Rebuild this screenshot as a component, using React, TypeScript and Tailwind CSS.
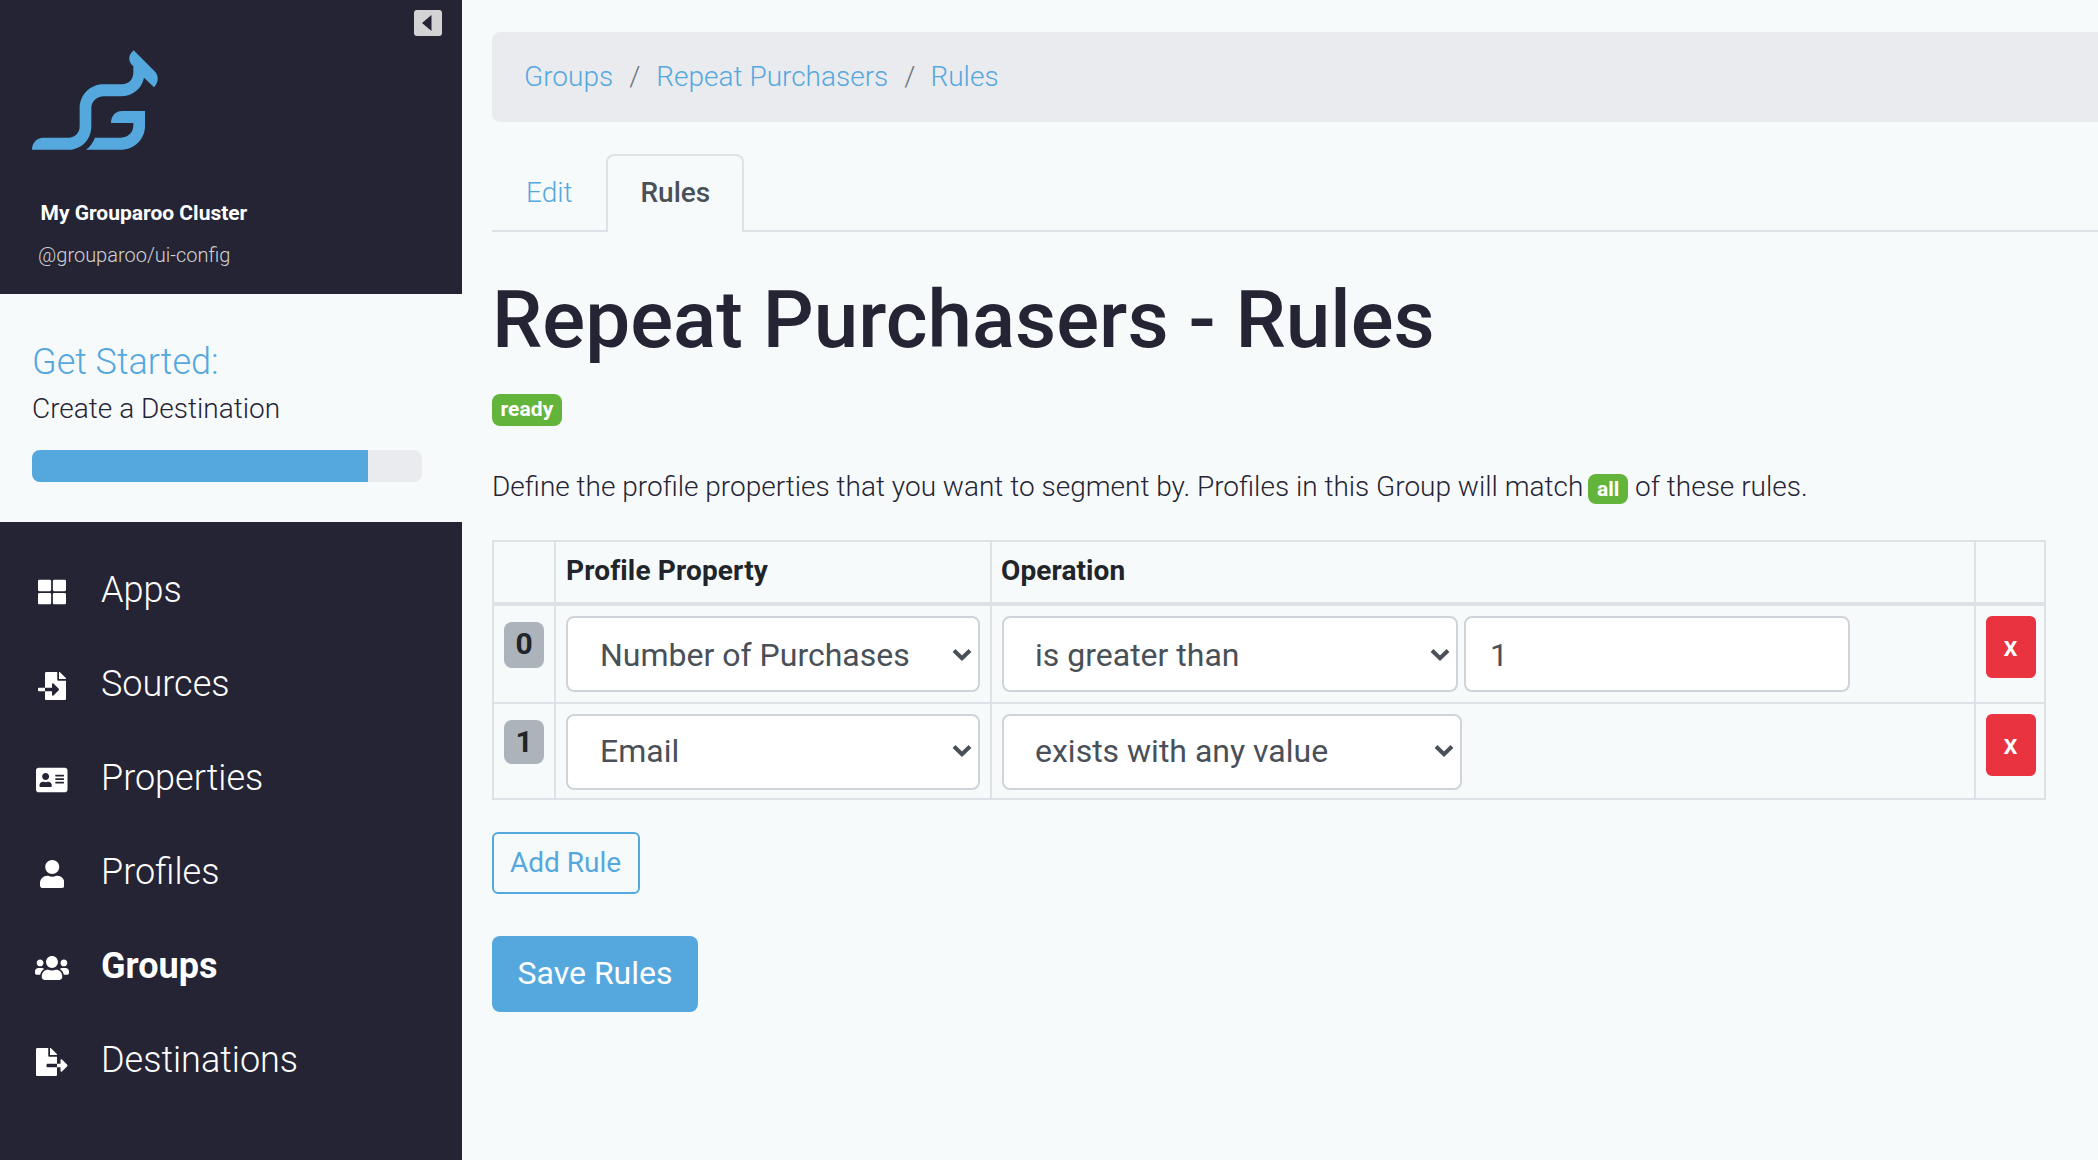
import React from "react";
import type { IconType } from "react-icons";
import {
  FaAddressCard,
  FaFileExport,
  FaFileImport,
  FaThLarge,
  FaUser,
  FaUsers,
} from "react-icons/fa";

function Logo() {
  return (
    <svg className="block h-[100px] w-[126px] fill-[#55a8de]" viewBox="96 150 378 300">
      <path d="M96 449.500C96 428 110 413 130 413H205C226 413 239 398 239 378V325C239 285 270 253 310 253H365C388 253 400 237 400 217V199C384 185 383 165 401 150.500L466 216C477 230 475 248 462 262L432 233C426 265 398 289 362 289H312C290 289 274 304 274 326V378C274 420 243 449.500 205 449.500Z" />
      <path d="M285 413H362C385 413 400 397 400 376V369H333C333 348 346 333 366 333H435V378C435 418 402 449.500 362 449.500H258C270 440 279 428 285 413Z" />
    </svg>
  );
}

const navItems: { label: string; icon: IconType; iconWidth: string; active?: boolean }[] = [
  { label: "Apps", icon: FaThLarge, iconWidth: "w-7" },
  { label: "Sources", icon: FaFileImport, iconWidth: "w-7" },
  { label: "Properties", icon: FaAddressCard, iconWidth: "w-[31.5px]" },
  { label: "Profiles", icon: FaUser, iconWidth: "w-[24.5px]" },
  { label: "Groups", icon: FaUsers, iconWidth: "w-[34px]", active: true },
  { label: "Destinations", icon: FaFileExport, iconWidth: "w-[31.5px]" },
];

function Sidebar() {
  return (
    <aside className="flex w-[462px] shrink-0 flex-col bg-[#252434] text-white">
      <header className="relative h-[294px] pt-[50px] pl-8">
        <button className="absolute top-[10px] left-[414px] flex h-[26px] w-7 items-center justify-center rounded-[3px] bg-[#d3d3d3]">
          <svg className="mr-[2px] h-4 w-[10px] fill-[#252434]" viewBox="0 0 10 16">
            <path d="M0 8L9.500 0V16Z" />
          </svg>
        </button>
        <Logo />
        <div className="mt-[47px] pl-[8.5px] text-[21px] leading-[32px] font-bold">My Grouparoo Cluster</div>
        <div className="mt-[10px] pl-[6px] text-[20px] leading-[32px] font-light text-[#d3d3d3]">
          @grouparoo/ui-config
        </div>
      </header>
      <section className="h-[228px] bg-[#f7fafb] px-8 pt-[41px]">
        <h5 className="text-[36px] leading-[54px] font-light text-[#55a8de]">Get Started:</h5>
        <p className="mt-[-1px] text-[28px] leading-[42px] font-light text-[#252434]">Create a Destination</p>
        <div className="mt-5 h-8 w-[390px] overflow-hidden rounded-lg bg-[#eaebee]">
          <div className="h-full w-[336px] bg-[#55a8de]" />
        </div>
      </section>
      <nav className="flex flex-col pt-[21px]">
        {navItems.map(({ label, icon: Icon, iconWidth, active }) => (
          <a key={label} className="flex h-[94px] items-center">
            <span className="mt-[3px] flex w-[104px] shrink-0 justify-center">
              <Icon className={`h-7 shrink-0 ${iconWidth}`} />
            </span>
            <span
              className={
                active
                  ? "-ml-[3px] text-[36px] leading-[54px] font-bold"
                  : "-ml-[3px] text-[36px] leading-[54px] font-light"
              }
            >
              {label}
            </span>
          </a>
        ))}
      </nav>
    </aside>
  );
}

function Select({ value, className }: { value: string; className: string }) {
  return (
    <div
      className={`flex h-[76px] shrink-0 items-center justify-between rounded-lg border-2 border-[#ced4da] bg-white pr-[6px] text-[32px] leading-[48px] text-[#495057] ${className}`}
    >
      <span className="whitespace-nowrap">{value}</span>
      <svg className="h-[14px] w-5 shrink-0 fill-none stroke-[#495057] stroke-[4]" viewBox="0 0 20 14">
        <path d="M2 2.500L10 10.200L18 2.500" />
      </svg>
    </div>
  );
}

const line = "border-[#dee2e6]";

function RuleRow({
  index,
  property,
  last,
  children,
}: {
  index: number;
  property: string;
  last?: boolean;
  children: React.ReactNode;
}) {
  return (
    <div
      className={`grid grid-cols-[62px_436px_984px_72px] border-b-2 ${line} ${last ? "h-[96px]" : "h-[98px]"}`}
    >
      <div className={`border-l-2 pt-4 pl-[10px] ${line}`}>
        <div
          className={`flex w-10 justify-center rounded-lg bg-[#adb3bb] text-[30px] leading-[44px] font-bold text-[#212529] ${
            last ? "h-11" : "h-[46px]"
          }`}
        >
          {index}
        </div>
      </div>
      <div className={`border-l-2 pt-[10px] pl-[10px] ${line}`}>
        <Select value={property} className={last ? "w-[414px] pb-[2px] pl-8" : "w-[414px] pt-px pl-8"} />
      </div>
      <div className={`flex gap-[6px] border-l-2 pt-[10px] pl-[10px] ${line}`}>{children}</div>
      <div className={`border-x-2 pt-[10px] pl-[10px] ${line}`}>
        <button className="flex h-[62px] w-[50px] items-center justify-center rounded-md bg-[#e93341] pr-px pb-px text-[28px] leading-[42px] font-medium text-white">
          x
        </button>
      </div>
    </div>
  );
}

export default function App() {
  return (
    <div className="flex h-[1160px] w-[2098px] overflow-hidden bg-[#f7fafb] font-['Roboto',sans-serif] text-[#252434]">
      <Sidebar />
      <main className="min-w-0 flex-1 pt-8 pl-[30px]">
        <ol className="-mr-8 flex h-[90px] items-center gap-4 rounded-lg bg-[#eaebee] px-8 text-[28px] leading-[42px] font-light text-[#55a8de]">
          <li>Groups</li>
          <li className="text-[#6c757d]">/</li>
          <li>Repeat Purchasers</li>
          <li className="text-[#6c757d]">/</li>
          <li className="-ml-px">Rules</li>
        </ol>
        <div className="mt-8 flex h-[78px] text-[28px] leading-[42px]">
          <div className={`w-[114px] border-b-2 pt-[18px] pl-[34px] font-light text-[#55a8de] ${line}`}>Edit</div>
          <div
            className={`w-[138px] rounded-t-lg border-2 border-b-0 pt-4 pl-[32.5px] font-medium text-[#495057] ${line}`}
          >
            Rules
          </div>
          <div className={`flex-1 border-b-2 ${line}`} />
        </div>
        <h1 className="mt-[40px] text-[80px] leading-[96px] font-medium">Repeat Purchasers - Rules</h1>
        <div className="mt-[26px] flex">
          <span className="h-8 w-[70px] rounded-lg bg-[#63b43b] text-center text-[21px] leading-[31px] font-bold tracking-[0.1px] text-white">
            ready
          </span>
        </div>
        <p className="mt-[40px] h-[42px] text-[28px] leading-[42px] font-light">
          Define the profile properties that you want to segment by. Profiles in this Group will match{" "}
          <span className="-ml-[2px] inline-block h-[30px] w-10 rounded-lg bg-[#63b43b] text-center text-[21px] leading-[30px] font-bold text-white">
            all
          </span>{" "}
          of these rules.
        </p>
        <div className={`mt-8 w-[1554px] border-t-2 ${line}`}>
          <div
            className={`grid h-16 grid-cols-[62px_436px_984px_72px] border-b-4 text-[28px] leading-[42px] font-bold text-[#212529] ${line}`}
          >
            <div className={`border-l-2 ${line}`} />
            <div className={`border-l-2 pt-2 pl-[10px] tracking-[0.15px] ${line}`}>Profile Property</div>
            <div className={`border-l-2 pt-2 pl-[9px] tracking-[0.1px] ${line}`}>Operation</div>
            <div className={`border-x-2 ${line}`} />
          </div>
          <RuleRow index={0} property="Number of Purchases">
            <Select value="is greater than" className="w-[456px] pt-px pl-[31px]" />
            <div className="flex h-[76px] w-[386px] items-center rounded-lg border-2 border-[#ced4da] bg-white pt-px pl-6 text-[32px] leading-[48px] text-[#495057]">
              1
            </div>
          </RuleRow>
          <RuleRow index={1} property="Email" last>
            <Select value="exists with any value" className="w-[460px] pb-[2px] pl-[31px]" />
          </RuleRow>
        </div>
        <div className="mt-8 flex flex-col items-start gap-[42px]">
          <button className="h-[62px] w-[148px] rounded-md border-2 border-[#55a8de] pr-px text-[28px] leading-[54px] text-[#55a8de]">
            Add Rule
          </button>
          <button className="h-[76px] w-[206px] rounded-lg bg-[#55a8de] pb-[2px] text-[32px] leading-[72px] text-white">
            Save Rules
          </button>
        </div>
      </main>
    </div>
  );
}
